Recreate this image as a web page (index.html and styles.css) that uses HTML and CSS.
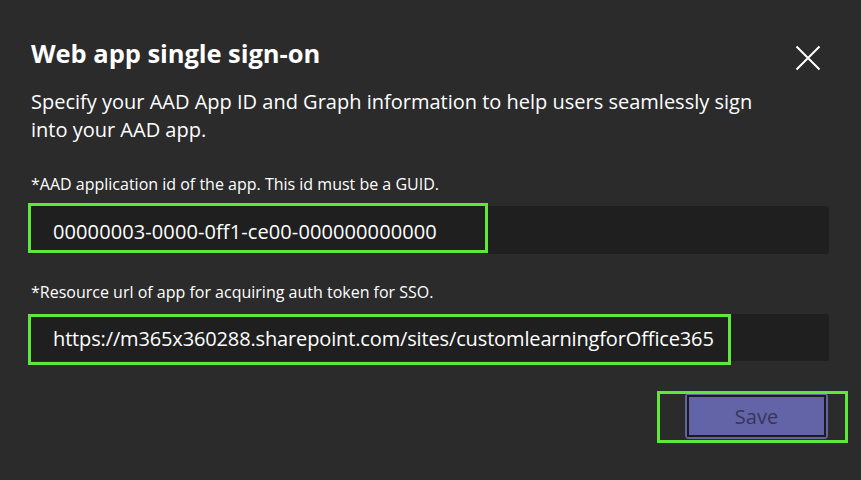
FILE: index.html
```html
<!DOCTYPE html>
<html lang="en">
<head>
<meta charset="utf-8">
<title>Web app single sign-on</title>
<link rel="stylesheet" href="styles.css">
</head>
<body>
<div class="dialog">
  <div class="header">
    <h1 class="title">Web app single sign-on</h1>
    <button class="close" aria-label="Close">
      <svg width="26" height="26" viewBox="0 0 26 26"><path d="M1.5 1.5L24.5 24.5M24.5 1.5L1.5 24.5" stroke="#ffffff" stroke-width="2" fill="none"/></svg>
    </button>
  </div>
  <p class="desc">Specify your AAD App ID and Graph information to help users seamlessly sign<br>into your AAD app.</p>
  <div class="field">
    <label class="label">*AAD application id of the app. This id must be a GUID.</label>
    <div class="input">
      <span class="value value-id">00000003-0000-0ff1-ce00-000000000000</span>
      <span class="mark mark-id"></span>
    </div>
  </div>
  <div class="field">
    <label class="label">*Resource url of app for acquiring auth token for SSO.</label>
    <div class="input input-url">
      <span class="value value-url">https://m365x360288.sharepoint.com/sites/customlearningforOffice365</span>
      <span class="mark mark-url"></span>
    </div>
  </div>
  <div class="actions">
    <button class="save"><span class="save-inner">Save</span><span class="mark mark-save"></span></button>
  </div>
</div>
</body>
</html>
```

FILE: styles.css
```css
html, body {
  margin: 0;
  padding: 0;
  background: #2b2b2b;
}
body {
  width: 861px;
  height: 480px;
  overflow: hidden;
  font-family: "Open Sans", "Noto Sans", sans-serif;
  color: #ffffff;
}
.dialog {
  padding: 38px 32px 0 28px;
}
.header {
  display: flex;
  justify-content: space-between;
  align-items: flex-start;
  height: 30px;
}
.title {
  margin: 0 0 0 3px;
  font-size: 25.5px;
  line-height: 30px;
  font-weight: 700;
  letter-spacing: -0.05px;
}
.close {
  margin: 7px 8px 0 0;
  padding: 0;
  border: 0;
  background: none;
  width: 26px;
  height: 26px;
  display: flex;
}
.desc {
  margin: 20px 0 0 3px;
  font-size: 20px;
  line-height: 28px;
}
.field {
  display: flex;
  flex-direction: column;
  margin-top: 30px;
}
.field + .field {
  margin-top: 28px;
}
.label {
  margin-left: 3px;
  font-size: 16px;
  line-height: 20px;
}
.input {
  position: relative;
  margin-top: 12px;
  height: 48px;
  background: #1f1f1f;
  border-radius: 3px;
  display: flex;
  align-items: center;
  padding-left: 25px;
  padding-top: 2px;
  box-sizing: border-box;
}
.input-url {
  height: 47px;
}
.value {
  font-size: 20px;
  white-space: nowrap;
}
.value-id {
  letter-spacing: 0.1px;
}
.value-url {
  letter-spacing: -0.14px;
}
.mark {
  position: absolute;
  border: 3px solid #5de83a;
  pointer-events: none;
}
.mark-id {
  left: 0;
  top: -3px;
  width: 454px;
  height: 44px;
}
.mark-url {
  left: 0;
  top: 0;
  width: 697px;
  height: 45px;
}
.actions {
  display: flex;
  justify-content: flex-end;
  margin-top: 32px;
  padding-right: 1px;
}
.save {
  position: relative;
  width: 143px;
  height: 46px;
  padding: 2px;
  border: 0;
  border-radius: 4px;
  background: #6264a7;
  display: flex;
}
.save-inner {
  flex: 1;
  border: 2.5px solid #1b1b1b;
  display: flex;
  align-items: center;
  justify-content: center;
  font-family: "Open Sans", "Noto Sans", sans-serif;
  font-size: 20px;
  color: #37365a;
}
.mark-save {
  left: -28px;
  top: -2px;
  width: 185px;
  height: 46px;
}
```
